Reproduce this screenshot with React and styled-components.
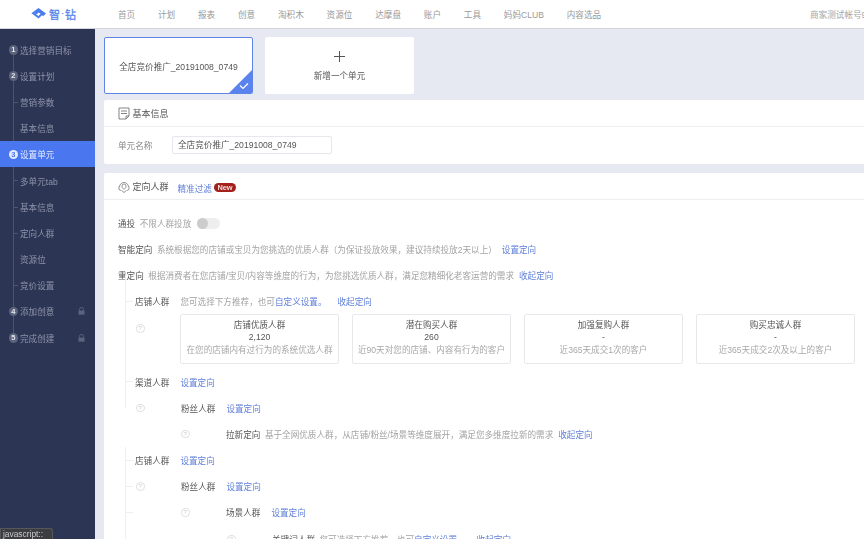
import React from "react";
import styled, { createGlobalStyle } from "styled-components";

const Global = createGlobalStyle`
  html, body { margin: 0; padding: 0; height: 100%; overflow: hidden; background: #e6e9f2; }
  * { box-sizing: border-box; }
  #root { width: 864px; height: 539px; overflow: hidden; font-family: "Liberation Sans", "Noto Sans CJK SC", sans-serif; font-size: 8.6px; color: #555; filter: blur(0.3px); text-spacing-trim: space-all; }
`;

const Page = styled.div`position: relative; width: 864px; height: 539px; overflow: hidden; display: flex; flex-direction: column;`;
const Header = styled.header`height: 28.5px; flex: none; background: #fff; border-bottom: 1px solid #d4d6dc; display: flex; align-items: center; white-space: nowrap;`;
const Logo = styled.div`width: 118px; flex: none; display: flex; align-items: center; padding-left: 31px; color: #5a86ee; font-size: 11px; font-weight: 400; gap: 3px; -webkit-text-stroke: 0.3px #5a86ee;`;
const LogoText = styled.span`display: flex; align-items: center;`;
const LogoDot = styled.span`display: inline-block; width: 5px; text-align: center; font-size: 8px; overflow: hidden;`;
const Nav = styled.nav`display: flex; gap: 22.8px; flex: 1; color: #9a9a9a;`;
const Account = styled.div`width: 54px; flex: none; overflow: hidden; color: #a5a5a5;`;
const Body = styled.div`display: flex; flex: 1; min-height: 0;`;
const Side = styled.aside`position: relative; width: 95px; flex: none; background: #2d3555; padding-top: 8px; color: #8e93a8;`;
const SideLine = styled.i`position: absolute; left: 13px; top: 20.5px; height: 289px; width: 1px; background: #4c5471;`;
const SideItem = styled.div`position: relative; height: 26.2px; display: flex; align-items: center; padding-left: 20px;
  background: ${(p) => (p.$active ? "#4a76f0" : "transparent")}; color: ${(p) => (p.$active ? "#e6ecff" : "inherit")};
  ${(p) => p.$child && `&::before { content: ""; position: absolute; left: 14px; top: 13px; width: 4px; height: 1px; background: #4c5471; }`}
`;
const Step = styled.span`position: absolute; left: 8.5px; top: 8.5px; width: 9.5px; height: 9.5px; border-radius: 50%; background: ${(p) => (p.$active ? "#e6ecff" : "#5c637d")}; color: ${(p) => (p.$active ? "#4a76f0" : "#e4e6ee")}; font-size: 7.5px; font-weight: 700; line-height: 9.5px; text-align: center;`;
const Lock = styled.svg`position: absolute; right: 10px; top: 9px; width: 7px; height: 8px;`;
const Main = styled.main`flex: 1; min-width: 0; padding: 8.5px 0 0 9px; overflow: hidden;`;
const Units = styled.div`display: flex; gap: 12px; margin-bottom: 6px;`;
const Unit = styled.div`position: relative; width: 149px; height: 57px; background: #fff; border-radius: 2px; overflow: hidden; display: flex; flex-direction: column; align-items: center; justify-content: center; color: #555;
  border: ${(p) => (p.$selected ? "1px solid #5f83e6" : "none")};
`;
const Corner = styled.svg`position: absolute; right: 0; bottom: 0; width: 23px; height: 23px;`;
const Plus = styled.svg`width: 11px; height: 11px; margin: 0 0 7px;`;
const Panel = styled.section`background: #fff; border-radius: 2px 0 0 2px; margin-bottom: 9px;`;
const PanelHead = styled.div`height: 27px; border-bottom: 1px solid #eceef2; display: flex; align-items: center; padding-left: 14px; color: #555; font-size: 9px;`;
const HeadIcon = styled.svg`width: 12px; height: 13px; margin-right: 2.5px; flex: none;`;
const NameRow = styled.div`height: 37px; display: flex; align-items: center; padding: 0 0 1px 14px; color: #888;`;
const NameLabel = styled.span`width: 54px;`;
const NameInput = styled.div`width: 160px; height: 17.5px; border: 1px solid #e6e8ee; border-radius: 2px; color: #555; padding-left: 5px; line-height: 17px; font-size: 8.6px;`;
const Link = styled.a`color: #5f7fd9; margin-left: ${(p) => p.$ml ?? 5}px;`;
const HeadFilter = styled.span`display: flex; align-items: center; margin: 3px 0 0 9px; font-size: 8.6px; color: #5f7fd9;`;
const InlineLink = styled.span`color: #5f7fd9;`;
const NewTag = styled.span`margin-left: 2px; background: #a3201c; color: #f2dcdc; border-radius: 5px; font-size: 7.4px; font-weight: 700; padding: 0 3.5px; line-height: 9.5px;`;
const Body2 = styled.div`padding-top: 9.5px;`;
const Row = styled.div`position: relative; height: 26.2px; display: flex; align-items: center; white-space: nowrap; padding-left: ${(p) => p.$indent}px;`;
const Label = styled.span`color: #555; margin-right: ${(p) => p.$gap ?? 4.5}px;`;
const Desc = styled.span`color: #a3a3a3;`;
const Toggle = styled.span`position: relative; display: inline-block; width: 23px; height: 11px; margin: 1px 0 0 6px; background: #eee; border-radius: 5.5px;
  &::before { content: ""; position: absolute; left: 0; top: 0; width: 11px; height: 11px; border-radius: 50%; background: #ccc; }
`;
const Tree = styled.div`position: relative;
  &::before { content: ""; position: absolute; left: 21px; top: ${(p) => p.$top}px; bottom: ${(p) => p.$bottom}px; width: 1px; background: #eeeff2; }
`;
const Tick = styled.i`position: absolute; left: 22px; top: 13px; width: 7px; height: 1px; background: #eeeff2;`;
const Help = styled.span`position: absolute; left: ${(p) => p.$left}px; top: ${(p) => p.$top ?? 9}px; width: 8.5px; height: 8.5px; border: 1px solid #dedede; border-radius: 50%; color: #ccc; font-size: 6px; line-height: 6.5px; text-align: center;`;
const CardRow = styled.div`position: relative; height: 54.2px; padding: 0 0 0 76px; display: flex; gap: 13px;`;
const Card = styled.div`width: 159px; height: 50px; border: 1px solid #e7e8ec; border-radius: 2px; display: flex; flex-direction: column; align-items: center; justify-content: center; padding-bottom: 3px; line-height: 12.7px; color: #555;`;
const CardDesc = styled.div`color: #a8a8a8;`;
const Tip = styled.div`position: absolute; left: 0; bottom: 0; height: 11px; width: 53px; background: #3b3d40; border: 1px solid #55575a; border-bottom: none; border-radius: 0 3px 0 0; color: #c8c8c8; font-size: 8.4px; padding-left: 2px; line-height: 11px; overflow: hidden;`;

const navItems = ["首页", "计划", "报表", "创意", "淘积木", "资源位", "达摩盘", "账户", "工具", "妈妈CLUB", "内容选品"];
const side = [
  { t: "选择营销目标", n: 1 }, { t: "设置计划", n: 2 }, { t: "营销参数", c: 1 }, { t: "基本信息" },
  { t: "设置单元", n: 3, a: 1 }, { t: "多单元tab", c: 1 }, { t: "基本信息", c: 1 }, { t: "定向人群", c: 1 }, { t: "资源位" }, { t: "竞价设置", c: 1 },
  { t: "添加创意", n: 4, l: 1 }, { t: "完成创建", n: 5, l: 1 },
];
const cards = [
  ["店铺优质人群", "2,120", "在您的店铺内有过行为的系统优选人群"],
  ["潜在购买人群", "260", "近90天对您的店铺、内容有行为的客户"],
  ["加强复购人群", "-", "近365天成交1次的客户"],
  ["购买忠诚人群", "-", "近365天成交2次及以上的客户"],
];

export default function App() {
  return (
    <Page>
      <Global />
      <Header>
        <Logo>
          <svg width="15" height="11" viewBox="0 0 15 11">
            <path d="M4 6.5L7.5 3.2 11 5.8 7.5 9.2 2 5.2 7.5 1.2 13.6 5.6 11.5 7.6" fill="none" stroke="#4a7cf0" strokeWidth="1.9" />
          </svg>
          <LogoText>智<LogoDot>·</LogoDot>钻</LogoText>
        </Logo>
        <Nav>{navItems.map((n) => <span key={n}>{n}</span>)}</Nav>
        <Account>商家测试帐号9</Account>
      </Header>
      <Body>
        <Side>
          <SideLine />
          {side.map((s, i) => (
            <SideItem key={i} $active={s.a} $child={s.c}>
              {s.n && <Step $active={s.a}>{s.n}</Step>}
              {s.t}
              {s.l && (
                <Lock viewBox="0 0 7 8">
                  <path d="M1.5 3.5V2.4a2 2 0 0 1 4 0v1.1" fill="none" stroke="#5c637d" />
                  <rect x="0.5" y="3.5" width="6" height="4.2" fill="#5c637d" />
                </Lock>
              )}
            </SideItem>
          ))}
        </Side>
        <Main>
          <Units>
            <Unit $selected>
              全店竞价推广_20191008_0749
              <Corner viewBox="0 0 23 23">
                <path d="M23 0V23H0z" fill="#5b83ee" />
                <path d="M11 15.5l3 3 5-5" fill="none" stroke="#fff" strokeWidth="1.2" />
              </Corner>
            </Unit>
            <Unit>
              <Plus viewBox="0 0 11 11"><path d="M5.5 0v11M0 5.5h11" stroke="#555" strokeWidth="1" /></Plus>
              新增一个单元
            </Unit>
          </Units>
          <Panel>
            <PanelHead>
              <HeadIcon viewBox="0 0 12 13">
                <path d="M1 1h10v8l-3 3H1z M8 12V9h3 M3 4h6M3 6.5h6" fill="none" stroke="#777" strokeWidth="0.9" />
              </HeadIcon>
              基本信息
            </PanelHead>
            <NameRow>
              <NameLabel>单元名称</NameLabel>
              <NameInput>全店竞价推广_20191008_0749</NameInput>
            </NameRow>
          </Panel>
          <Panel>
            <PanelHead>
              <HeadIcon viewBox="0 0 12 13">
                <path d="M1.5 7a4.5 4.5 0 0 1 9 0M4 6a2 2 0 0 1 4 0c0 2-1 3-2 3s-2-1-2-3zM1 6.5v3l2 1M11 6.5v3l-2 1M3.5 10.5l2.5 2 2.5-2" fill="none" stroke="#888" strokeWidth="0.9" />
              </HeadIcon>
              定向人群
              <HeadFilter>精准过滤<NewTag>New</NewTag></HeadFilter>
            </PanelHead>
            <Body2>
              <Row $indent={14}><Label>通投</Label><Desc>不限人群投放</Desc><Toggle /></Row>
              <Row $indent={14}><Label>智能定向</Label><Desc>系统根据您的店铺或宝贝为您挑选的优质人群（为保证投放效果，建议持续投放2天以上）</Desc><Link>设置定向</Link></Row>
              <Row $indent={14}><Label>重定向</Label><Desc>根据消费者在您店铺/宝贝/内容等维度的行为，为您挑选优质人群，满足您精细化老客运营的需求</Desc><Link>收起定向</Link></Row>
              <Tree $top={-13} $bottom={13}>
                <Row $indent={31}>
                  <Tick />
                  <Label $gap={11}>店铺人群</Label>
                  <Desc>您可选择下方推荐，也可<InlineLink>自定义设置。</InlineLink></Desc>
                  <Link $ml={11}>收起定向</Link>
                </Row>
                <CardRow>
                  <Help $left={32} $top={10}>?</Help>
                  {cards.map((c) => (
                    <Card key={c[0]}><div>{c[0]}</div><div>{c[1]}</div><CardDesc>{c[2]}</CardDesc></Card>
                  ))}
                </CardRow>
                <Row $indent={31}><Tick /><Label $gap={11}>渠道人群</Label><Link $ml={0}>设置定向</Link></Row>
                <Row $indent={77}><Help $left={32}>?</Help><Label $gap={11}>粉丝人群</Label><Link $ml={0}>设置定向</Link></Row>
              </Tree>
              <Row $indent={122}><Help $left={77}>?</Help><Label>拉新定向</Label><Desc>基于全网优质人群，从店铺/粉丝/场景等维度展开，满足您多维度拉新的需求</Desc><Link>收起定向</Link></Row>
              <Tree $top={0} $bottom={-30}>
                <Row $indent={31}><Tick /><Label $gap={11}>店铺人群</Label><Link $ml={0}>设置定向</Link></Row>
                <Row $indent={77}><Tick /><Help $left={32}>?</Help><Label $gap={11}>粉丝人群</Label><Link $ml={0}>设置定向</Link></Row>
                <Row $indent={122}><Tick /><Help $left={77}>?</Help><Label $gap={11}>场景人群</Label><Link $ml={0}>设置定向</Link></Row>
                <Row $indent={168}><Help $left={123}>?</Help><Label>关键词人群</Label><Desc>您可选择下方推荐，也可<InlineLink>自定义设置。</InlineLink></Desc><Link $ml={11}>收起定向</Link></Row>
              </Tree>
            </Body2>
          </Panel>
        </Main>
      </Body>
      <Tip>javascript::</Tip>
    </Page>
  );
}
